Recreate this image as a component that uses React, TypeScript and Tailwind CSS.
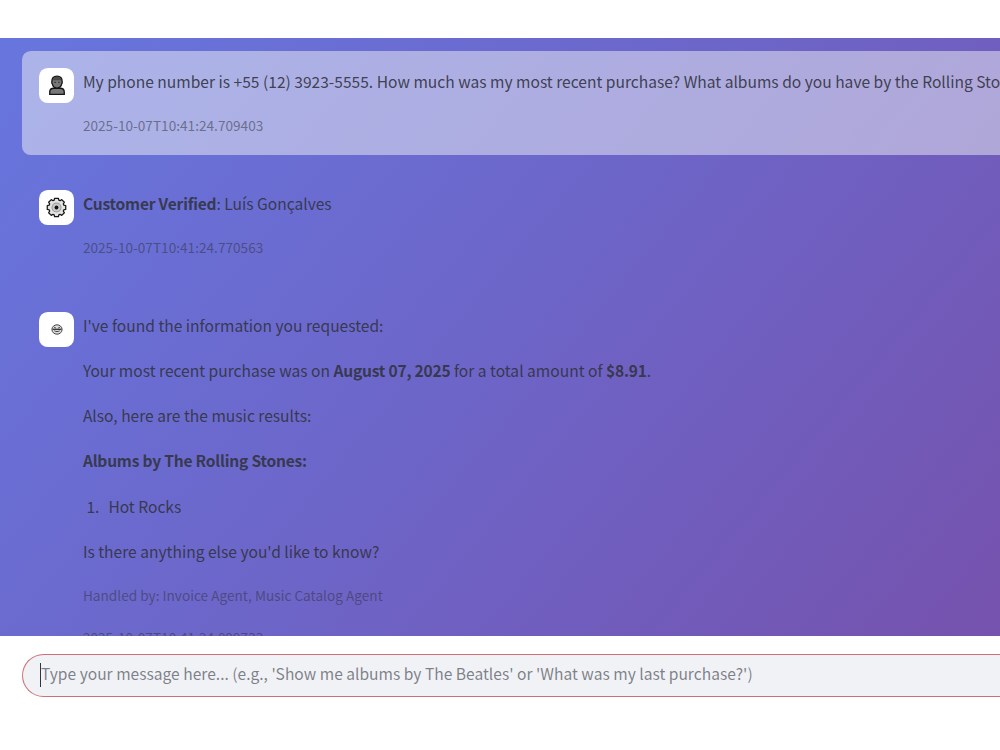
import type { ReactNode } from "react"

const BustIcon = () => (
  <svg width="18" height="21" viewBox="0 0 18 22" fill="#777" stroke="#151515" strokeWidth="1.4">
    <path d="M1.4 20.3v-2.4c0-2.6 1.9-4 4.4-4h6.4c2.5 0 4.4 1.4 4.4 4v2.4z" />
    <path d="M3.6 7.2C3.6 3.6 5.8 1.2 9 1.2s5.4 2.4 5.4 6c0 .8.3 1.6-.5 2.2-.5 2.6-2.4 4.3-4.9 4.3S4.6 12 4.1 9.4c-.8-.6-.5-1.4-.5-2.2z" />
    <path d="M4.3 5.6C5 3 7 1.9 9 1.9s4 1.1 4.7 3.7z" fill="#4a4a4a" stroke="none" />
    <path d="M6.3 7.7h1.4M10.3 7.7h1.4" strokeWidth="1" />
  </svg>
)

const GearIcon = () => (
  <svg width="21" height="21" viewBox="0 0 20 20" fill="none">
    <path
      d="M8.2 1.2h3.6l.4 1.8 1.2.5 1.6-1 2.5 2.5-1 1.6.5 1.2 1.8.4v3.6l-1.8.4-.5 1.2 1 1.6-2.5 2.5-1.6-1-1.2.5-.4 1.8H8.2l-.4-1.8-1.2-.5-1.6 1L2.5 15l1-1.6-.5-1.2-1.8-.4V8.2L3 7.8l.5-1.2-1-1.6L5 2.5l1.6 1 1.2-.5z"
      fill="#e4e4e4"
      stroke="#161616"
      strokeWidth="1.2"
      strokeLinejoin="round"
    />
    <circle cx="10" cy="10" r="4.3" fill="#c9c9c9" stroke="#9a9a9a" strokeWidth="1" />
    <circle cx="10" cy="10" r="1.8" fill="#111" />
  </svg>
)

const FaceIcon = () => (
  <svg width="12" height="11" viewBox="0 0 12 11" fill="none" stroke="#333">
    <ellipse cx="6" cy="5.5" rx="5.1" ry="4.7" fill="#ddd" strokeWidth=".9" />
    <path d="M3 3.2l2 .9M9 3.2l-2 .9" strokeWidth=".8" />
    <path d="M1.5 5.3h9" strokeWidth="1.3" />
    <path d="M3.3 6.8c1.6 1 3.8 1 5.4 0" strokeWidth=".9" />
  </svg>
)

type MessageProps = {
  icon: ReactNode
  highlighted?: boolean
  children: ReactNode
}

const Message = ({ icon, highlighted, children }: MessageProps) => (
  <div
    className={`flex items-start gap-[8.7px] rounded-l-[8.7px] pb-[17.4px] pl-[17.4px] ${
      highlighted ? "bg-[#f0f2f6]/50 pt-[17px]" : "pt-[17.4px]"
    }`}
  >
    <div className="flex size-[34.8px] shrink-0 items-center justify-center rounded-[8.7px] bg-white">
      {icon}
    </div>
    <div className="-mb-[17.4px] flex min-w-0 flex-col whitespace-nowrap">
      {children}
    </div>
  </div>
)

const Text = ({ children }: { children: ReactNode }) => (
  <p className="mb-[17.4px] leading-[27.8px]">{children}</p>
)

const Bold = ({ children }: { children: ReactNode }) => (
  <strong className="tracking-[-0.22px]">{children}</strong>
)

const Caption = ({ children }: { children: ReactNode }) => (
  <p className="mb-[17.4px] text-[13.65px] leading-[24.3px] text-[#31333f]/55">
    {children}
  </p>
)

export default function App() {
  return (
    <div className="flex h-[750px] flex-col overflow-hidden bg-white font-['Noto_Sans_CJK_SC',sans-serif] text-[15.59px] text-[#31333f]/90">
      <header className="h-[38px] shrink-0" />

      <main className="flex h-[598px] shrink-0 flex-col gap-[17.6px] overflow-hidden bg-linear-[130deg] from-[#6776de] via-[#6d65c8] to-[#7552ad] pt-[13.2px] pl-[22px]">
        <Message icon={<BustIcon />} highlighted>
          <Text>
            My phone number is +55 (12) 3923-5555. How much was my most recent
            purchase? What albums do you have by the Rolling Stones?
          </Text>
          <Caption>2025-10-07T10:41:24.709403</Caption>
        </Message>

        <Message icon={<GearIcon />}>
          <Text>
            <Bold>Customer Verified</Bold>: Luís Gonçalves
          </Text>
          <Caption>2025-10-07T10:41:24.770563</Caption>
        </Message>

        <Message icon={<FaceIcon />}>
          <Text>I've found the information you requested:</Text>
          <Text>
            Your most recent purchase was on <Bold>August 07, 2025</Bold> for a
            total amount of <Bold>$8.91</Bold>.
          </Text>
          <Text>Also, here are the music results:</Text>
          <Text>
            <Bold>Albums by The Rolling Stones:</Bold>
          </Text>
          <ol className="mb-[17.4px] leading-[27.8px]">
            <li className="flex">
              <span className="w-[25.5px] pl-[3.5px]">1.</span>
              <span>Hot Rocks</span>
            </li>
          </ol>
          <Text>Is there anything else you'd like to know?</Text>
          <Caption>Handled by: Invoice Agent, Music Catalog Agent</Caption>
          <Caption>2025-10-07T10:41:24.899733</Caption>
        </Message>
      </main>

      <footer className="pt-[17.5px] pl-[22px]">
        <div className="flex h-[43.5px] items-center rounded-l-full border border-r-0 border-[#cf7078] bg-[#f0f2f6] pl-[17px]">
          <span className="h-6 w-px bg-[#31333f]" />
          <span className="pb-[3px] whitespace-nowrap text-[#31333f]/60">
            Type your message here... (e.g., 'Show me albums by The Beatles' or
            'What was my last purchase?')
          </span>
        </div>
      </footer>
    </div>
  )
}
